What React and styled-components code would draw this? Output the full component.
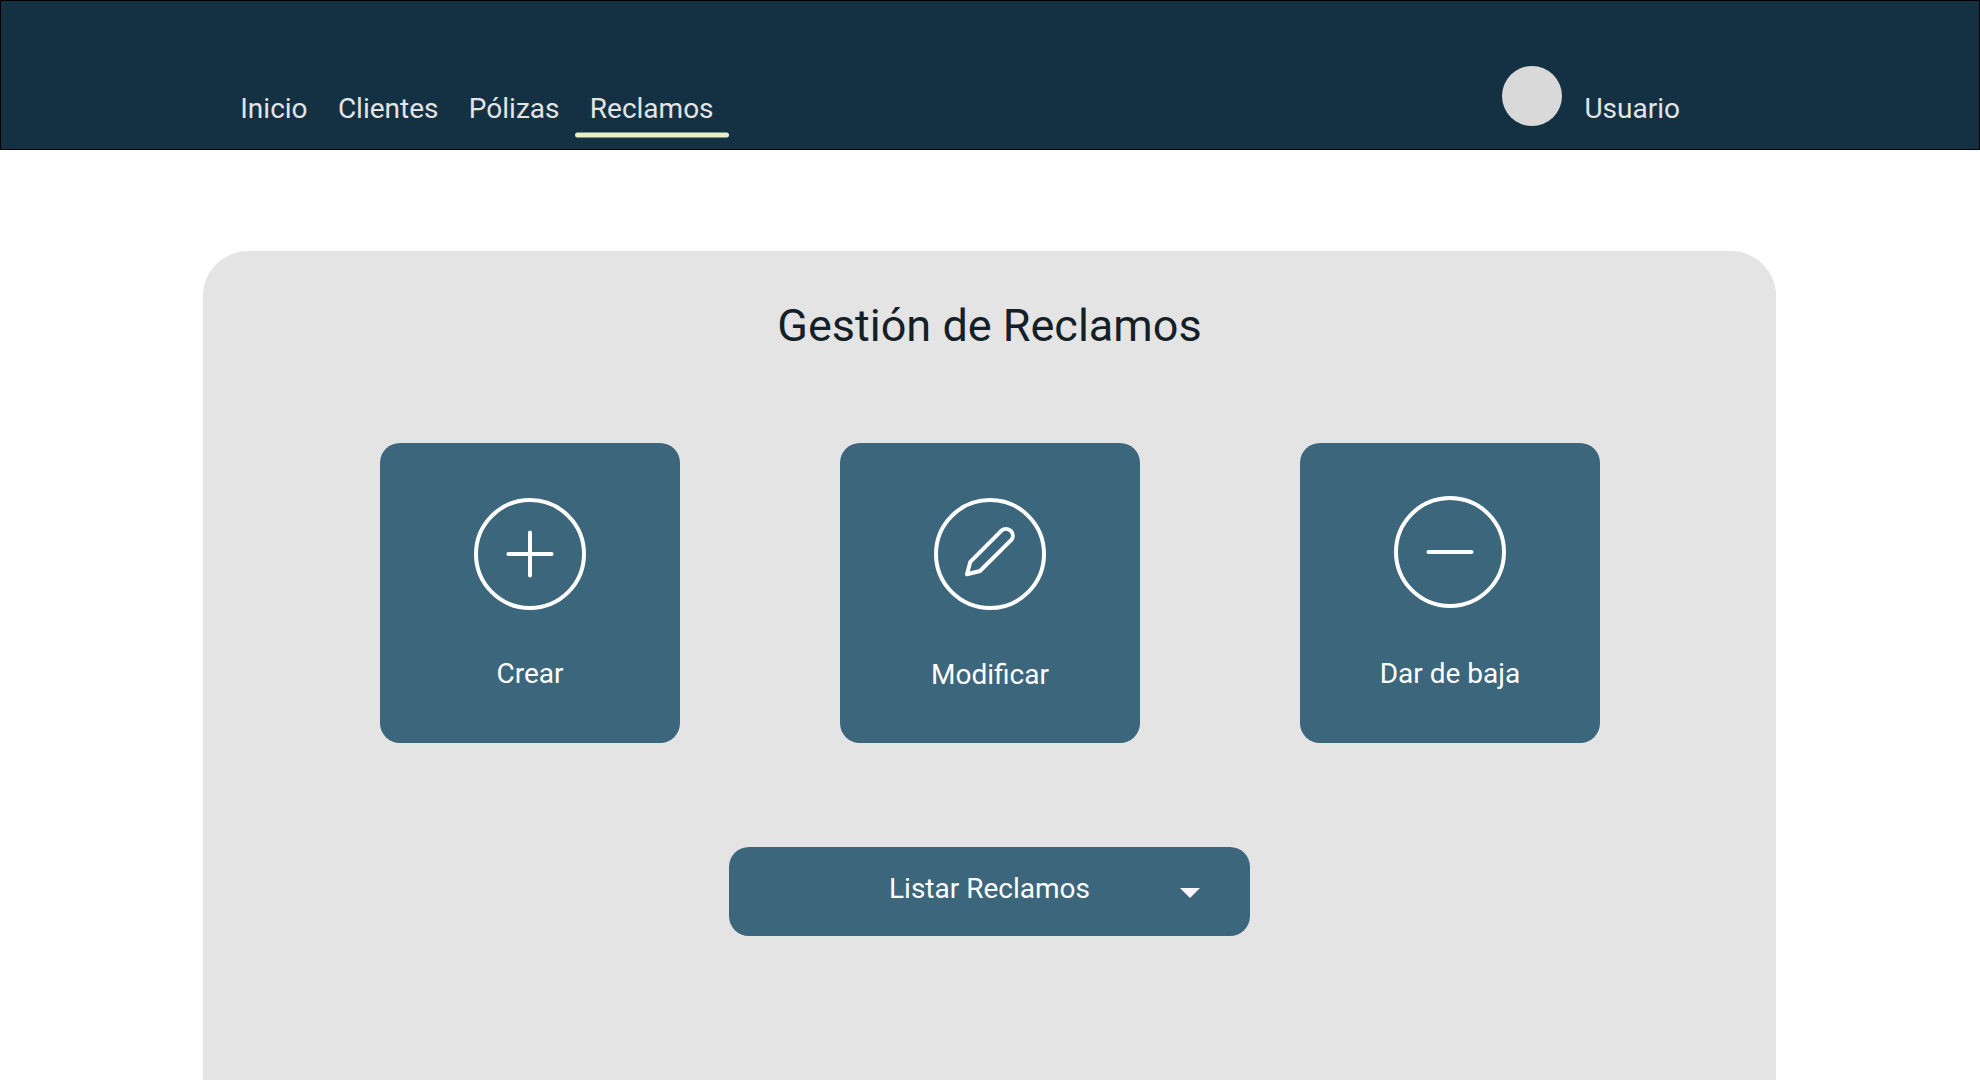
import React from "react";
import styled, { createGlobalStyle } from "styled-components";

const GlobalStyle = createGlobalStyle`
  *, *::before, *::after { box-sizing: border-box; }
  html, body { margin: 0; padding: 0; background: #fff; overflow: hidden; }
  body { font-family: Roboto, "Liberation Sans", sans-serif; }
`;

const Page = styled.div`
  height: 1080px;
  display: flex;
  flex-direction: column;
  overflow: hidden;
`;

const Header = styled.header`
  flex: none;
  height: 150px;
  padding: 0 299px 0 224.1px;
  display: flex;
  justify-content: space-between;
  align-items: flex-start;
  background: #133142;
  border: 1px solid #000;
`;

const Nav = styled.nav`
  display: flex;
  padding-top: 90px;
`;

const NavItem = styled.a`
  height: 52px;
  padding: 0 15.16px;
  font-size: 28px;
  line-height: 36px;
  color: #e4e4e4;
  text-decoration: none;
  display: flex;
  flex-direction: column;
`;

const Underline = styled.span`
  height: 5px;
  margin: 5px -15.16px 0;
  border-radius: 2.5px;
  background: #e9efc8;
  transform: translateY(0.5px);
`;

const User = styled.div`
  display: flex;
  align-items: flex-start;
  gap: 22px;
  padding-top: 65px;
`;

const Avatar = styled.div`
  width: 60px;
  height: 60px;
  border-radius: 50%;
  background: #d9d9d9;
`;

const UserName = styled.span`
  margin-top: 25px;
  font-size: 28px;
  line-height: 36px;
  color: #e4e4e4;
`;

const Panel = styled.main`
  flex: 1;
  width: 1573px;
  margin: 101px 0 0 203px;
  padding-top: 49px;
  border-radius: 45px 45px 0 0;
  background: #e4e4e4;
  display: flex;
  flex-direction: column;
  align-items: center;
`;

const Title = styled.h1`
  margin: 0;
  font-size: 45px;
  line-height: 52px;
  font-weight: 400;
  color: #142027;
`;

const Cards = styled.div`
  display: flex;
  gap: 160px;
  margin: 91px 0 0 1px;
`;

const Card = styled.button`
  width: 300px;
  height: 300px;
  padding: ${({ $iconTop }) => $iconTop}px 0 0;
  border: 0;
  border-radius: 20px;
  background: #3c667c;
  color: #fff;
  font: 400 28px/36px Roboto, "Liberation Sans", sans-serif;
  display: flex;
  flex-direction: column;
  align-items: center;
`;

const CardLabel = styled.span`
  margin-top: ${({ $gap }) => $gap}px;
`;

const CircleIcon = styled.svg`
  display: block;
  width: 112px;
  height: 112px;
  fill: none;
  stroke: currentColor;
  stroke-width: 4;
  stroke-linecap: round;
  stroke-linejoin: round;
`;

const ListButton = styled.button`
  width: 521px;
  height: 89px;
  margin-top: 104px;
  padding: 0 50px;
  border: 0;
  border-radius: 20px;
  background: #3c667c;
  color: #fff;
  font: 400 28px/36px Roboto, "Liberation Sans", sans-serif;
  display: grid;
  grid-template-columns: 20px 1fr 20px;
  align-items: start;
`;

const ListLabel = styled.span`
  grid-column: 2;
  padding-top: 24px;
`;

const Caret = styled.svg`
  width: 20px;
  height: 10px;
  margin-top: 41px;
  fill: #fef7ff;
`;

const sections = ["Inicio", "Clientes", "Pólizas", "Reclamos"];

const actions = [
  { label: "Crear", iconTop: 55, gap: 46, glyph: <path d="M56 34.4v43.2M34.4 56h43.2" /> },
  {
    label: "Modificar",
    iconTop: 55,
    gap: 47,
    glyph: <path d="M33 76.2L36.3 63.8L67.5 32.6A6.8 6.8 0 0 1 77.1 42.2L46 73Z" />,
  },
  { label: "Dar de baja", iconTop: 53, gap: 48, glyph: <path d="M34.4 56h43.2" /> },
];

export default function App() {
  return (
    <Page>
      <GlobalStyle />
      <Header>
        <Nav>
          {sections.map((name) => (
            <NavItem key={name}>
              {name}
              {name === "Reclamos" && <Underline />}
            </NavItem>
          ))}
        </Nav>
        <User>
          <Avatar />
          <UserName>Usuario</UserName>
        </User>
      </Header>
      <Panel>
        <Title>Gestión de Reclamos</Title>
        <Cards>
          {actions.map(({ label, iconTop, gap, glyph }) => (
            <Card key={label} $iconTop={iconTop}>
              <CircleIcon viewBox="0 0 112 112">
                <circle cx="56" cy="56" r="54" />
                {glyph}
              </CircleIcon>
              <CardLabel $gap={gap}>{label}</CardLabel>
            </Card>
          ))}
        </Cards>
        <ListButton>
          <ListLabel>Listar Reclamos</ListLabel>
          <Caret viewBox="0 0 20 10">
            <path d="M0 0H20L10 10Z" />
          </Caret>
        </ListButton>
      </Panel>
    </Page>
  );
}
